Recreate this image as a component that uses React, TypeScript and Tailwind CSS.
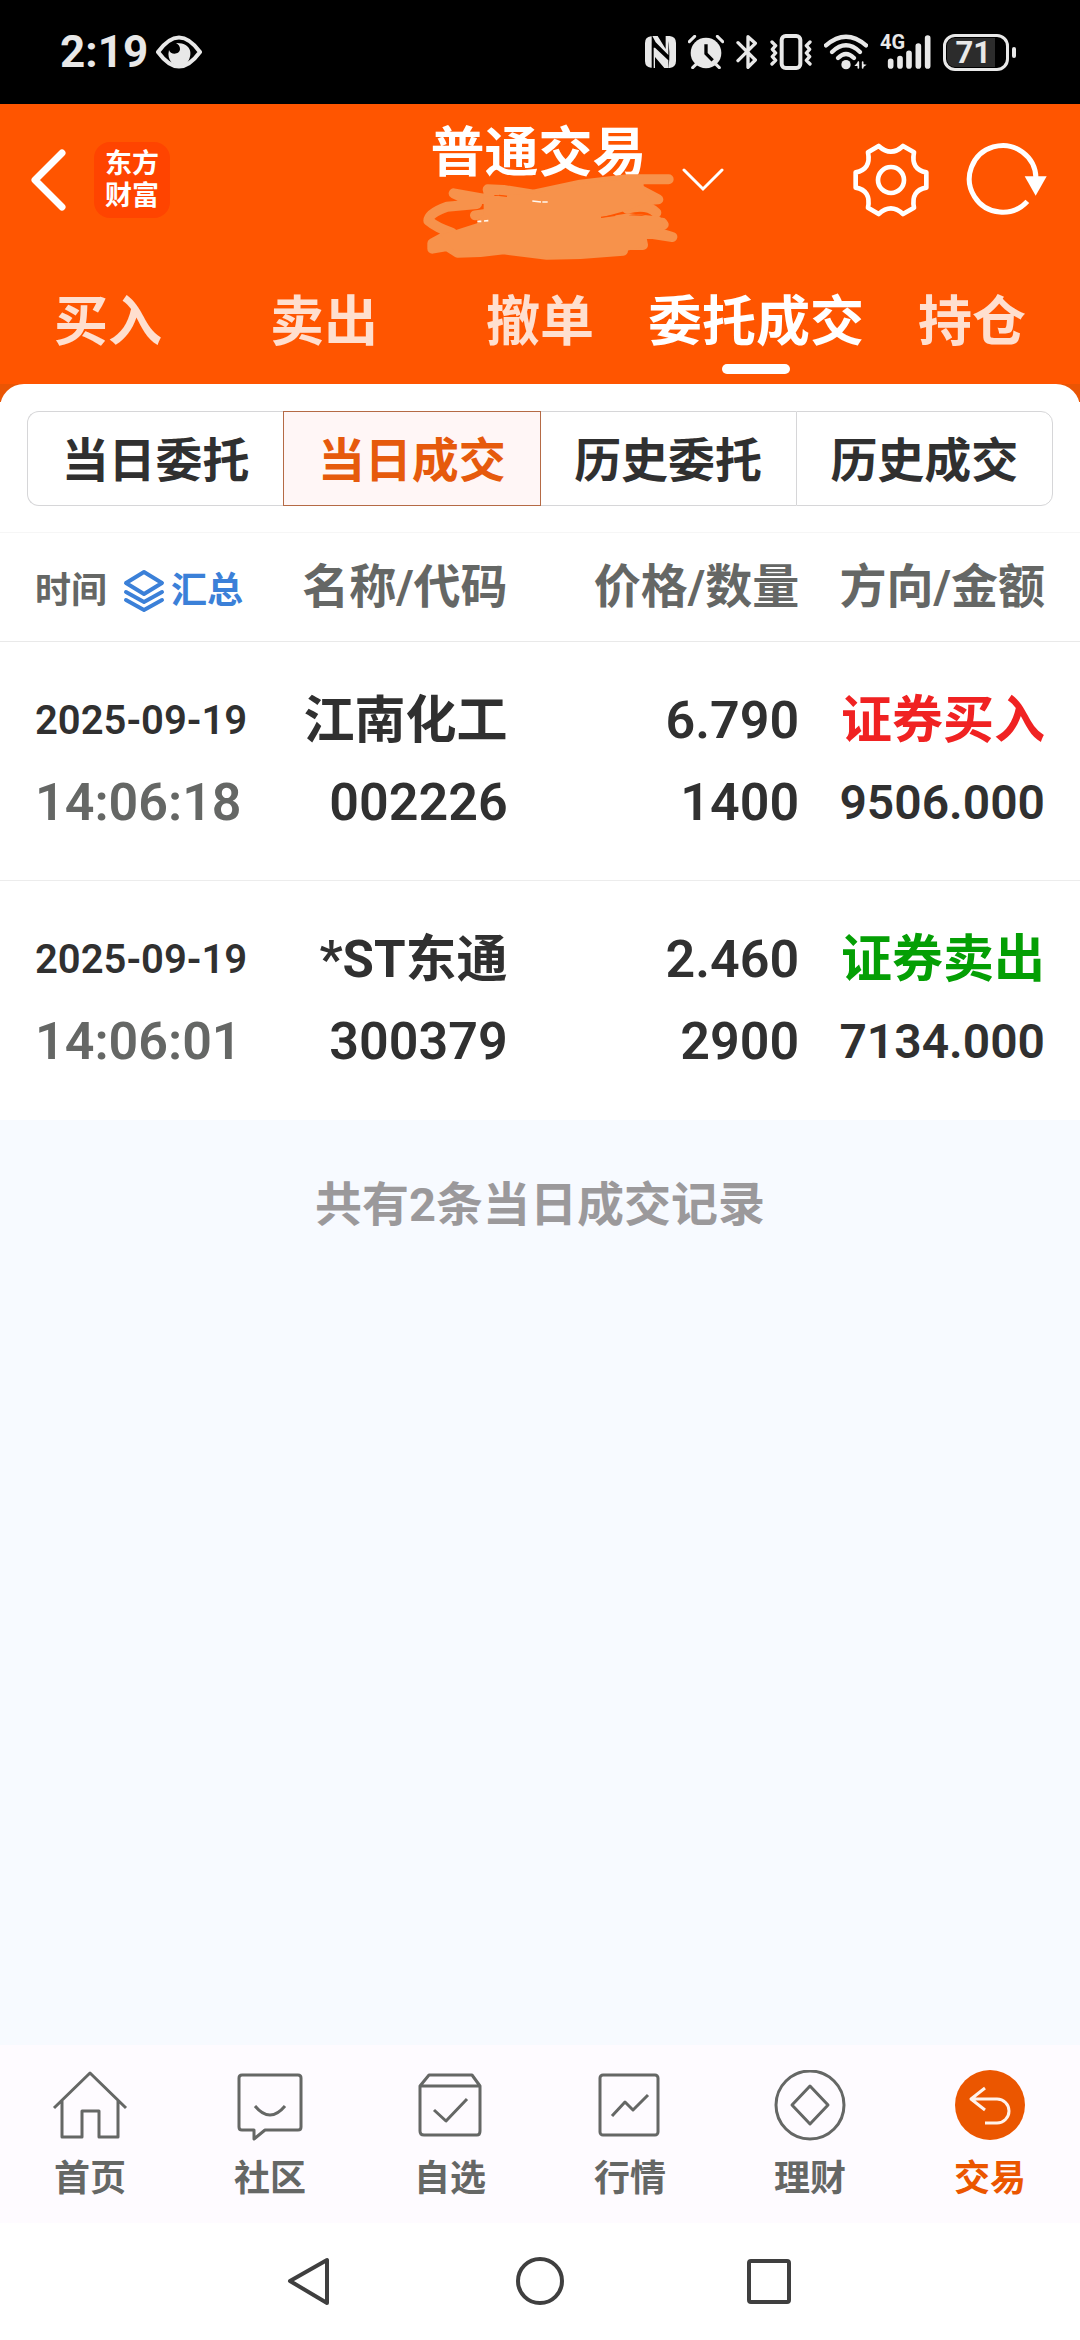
import React from "react";

const SANS = "font-['Roboto','Noto_Sans_CJK_SC',sans-serif]";

function StatusBar() {
  return (
    <div className="flex h-[104px] items-center justify-between bg-black pr-[64px] pl-[60px] text-[#e8e8e8]">
      <div className="flex items-center gap-2">
        <span className="text-[44px] leading-[52px] font-bold">2:19</span>
        <svg width="46" height="34" viewBox="0 0 46 34" fill="none" aria-hidden="true">
          <path d="M2 17 C10 6 16 2.500 23 2.500 C30 2.500 36 6 44 17 C36 28 30 31.500 23 31.500 C16 31.500 10 28 2 17Z" stroke="currentColor" strokeWidth="4" strokeLinejoin="round" />
          <path d="M20 8 C38 8 36 22 31 28 Q23 33 16 28 Q11 23 13 15 C14 20 24 20 24 14 Q24 10 20 8Z" fill="currentColor" />
        </svg>
      </div>
      <div className="flex items-center">
        <svg className="mr-3" width="31" height="34" viewBox="0 0 93 102" aria-hidden="true">
          <path d="M18 4 H20 V98 H18 Q0 96 0 78 V24 Q0 6 18 4Z" fill="currentColor" />
          <path d="M22 3 H38 L62 42 V3 H70 V60 L32 22 Z" fill="currentColor" />
          <path d="M30 38 L70 76 V99 H58 L30 66 V99 H26 V38Z" fill="currentColor" />
          <path d="M66 3 H74 Q93 5 93 24 V78 Q93 96 74 99 H70 Q78 50 66 3Z" fill="currentColor" />
        </svg>
        <svg className="mr-3" width="36" height="34" viewBox="0 0 108 102" fill="none" stroke="currentColor" aria-hidden="true">
          <circle cx="54" cy="54" r="46" fill="currentColor" stroke="none" />
          <path d="M4 20 L20 4 M104 20 L88 4 M24 88 L14 98 M84 88 L94 98" strokeWidth="9" strokeLinecap="round" />
          <path d="M54 28 V56 L74 76" stroke="#000" strokeWidth="10" />
        </svg>
        <svg className="mr-3" width="22" height="36" viewBox="0 0 66 108" fill="none" stroke="currentColor" strokeWidth="10" strokeLinecap="round" strokeLinejoin="round" aria-hidden="true">
          <path d="M6 26 L58 78 L36 100 V8 L58 28 L6 80" />
        </svg>
        <svg className="mr-3" width="42" height="36" viewBox="0 0 126 108" fill="none" stroke="currentColor" strokeLinecap="round" strokeLinejoin="round" aria-hidden="true">
          <rect x="35" y="6" width="56" height="96" rx="12" strokeWidth="12" />
          <path d="M6 24 L17 35 L7 46 L17 57 L7 68 L17 79 L6 90 M120 24 L109 35 L119 46 L109 57 L119 68 L109 79 L120 90" strokeWidth="10" />
        </svg>
        <svg className="mr-3" width="44" height="36" viewBox="0 0 132 108" fill="none" stroke="currentColor" strokeWidth="13" strokeLinecap="round" aria-hidden="true">
          <path d="M6 34 Q66 -18 126 34" />
          <path d="M24 54 Q66 14 108 54" />
          <path d="M42 72 Q66 48 90 72" />
          <circle cx="66" cy="92" r="14" fill="currentColor" stroke="none" />
          <path d="M91 96 L104 82 V104 V96Z M114 82 V104 M114 90 L128 92 L114 102Z" fill="currentColor" stroke="none" />
          <path d="M103 84 V102 M116 84 V102" strokeWidth="5" />
        </svg>
        <div className="relative mr-3 h-[36px] w-[51px]">
          <span className="absolute -top-px left-0 text-[20px] leading-[18px] font-bold">4G</span>
          <svg width="51" height="36" viewBox="0 0 153 108" stroke="currentColor" strokeWidth="17" strokeLinecap="round" aria-hidden="true">
            <path d="M32 82 V96 M60 74 V96 M87 58 V96 M115 36 V96 M143 12 V96" />
          </svg>
        </div>
        <div className="flex h-[37px] w-[66px] items-center rounded-[12px] border-[3px] border-current p-px">
          <div className="flex h-full w-[48px] items-center justify-end rounded-l-[8px] bg-[#2c2c2c] pr-1">
            <span className="text-[31px] leading-[31px] font-bold">71</span>
          </div>
        </div>
        <div className="ml-[3px] h-[11px] w-[4px] rounded-full bg-current" />
      </div>
    </div>
  );
}

function Scribble() {
  return (
    <svg className="-mt-[7px] -mb-1" width="255" height="86" viewBox="128 222 765 258" fill="none" aria-hidden="true">
      <g stroke="#f7924b" strokeWidth="30" strokeLinecap="round" strokeLinejoin="round">
        <path d="M865 238 L740 238 L600 254 L460 284 L370 270 L322 268 L330 300 L220 280 L290 312 L200 320 Q144 340 144 362 Q170 384 215 398 L156 430 L156 446 L200 438 L232 458 L300 456 L370 448 L500 464 L600 462 L728 452 L720 435 L788 435 L780 396 L876 411 L800 388 L850 374 L846 368 L780 366" />
        <path d="M284 346 L400 330 L834 298 L780 270 M828 338 Q800 310 740 326" />
      </g>
      <path fill="#f7924b" d="M310 290 L460 280 L620 250 L790 232 L790 270 L815 300 L745 330 L660 353 L745 340 L840 350 L850 380 L800 410 L790 440 L700 462 L500 474 L370 460 L220 450 L180 405 L290 370 L310 340Z" />
      <path stroke="#ff5500" strokeWidth="4" d="M356 286 L380 289 M662 352 L705 346" />
      <path fill="#ff5500" d="M745 346 Q770 338 796 348Z" />
      <path stroke="#fff8f0" strokeWidth="5" d="M456 303 L482 306 M486 306 H502 M291 364 H303 M311 363 L324 362" />
    </svg>
  );
}

const tabs = ["买入", "卖出", "撤单", "委托成交", "持仓"];

function Header() {
  return (
    <header className="bg-[#ff5500] text-white">
      <div className="grid grid-cols-[1fr_auto_1fr] items-center">
        <div className="flex items-center gap-7 pl-[30px]">
          <button type="button" aria-label="返回">
            <svg width="36" height="62" viewBox="0 0 36 62" fill="none" stroke="currentColor" strokeWidth="7" strokeLinecap="round" strokeLinejoin="round">
              <path d="M32 4 L5 31 L32 58" />
            </svg>
          </button>
          <a href="#home" className="flex size-[76px] flex-col items-center justify-center rounded-[16px] bg-[#ff4400] text-[27px] leading-[32px] font-bold">
            <span>东方</span>
            <span>财富</span>
          </a>
        </div>
        <button type="button" className="flex items-center gap-1 pl-[66px]">
          <span className="flex flex-col items-start pt-[23px]">
            <span className="pl-2 text-[54px] leading-[54px] font-bold">普通交易</span>
            <Scribble />
          </span>
          <svg width="42" height="24" viewBox="0 0 42 24" fill="none" stroke="currentColor" strokeWidth="3" strokeLinecap="round" aria-hidden="true">
            <path d="M2 2 L21 21 L40 2" />
          </svg>
        </button>
        <div className="flex items-center justify-end gap-9 pr-[32px]">
          <button type="button" aria-label="设置">
            <svg width="76" height="76" viewBox="453 125 228 228" fill="none" stroke="currentColor" strokeWidth="14" strokeLinejoin="round">
              <path d="M530 137 Q567 171 603 137 L636 156 Q626 208 673 216 L673 262 Q626 270 636 322 L603 341 Q567 307 530 341 L498 322 Q508 270 461 262 L461 216 Q508 208 498 156 Z" />
              <circle cx="567" cy="239" r="39" />
            </svg>
          </button>
          <button type="button" aria-label="刷新">
            <svg width="83" height="76" viewBox="793 125 249 228" fill="none" stroke="currentColor" strokeWidth="15">
              <path d="M980 303 A100 100 0 1 1 1006 234" />
              <path d="M972 228 H1038 L1005 286Z" fill="currentColor" stroke="none" />
            </svg>
          </button>
        </div>
      </div>
      <nav className="grid grid-cols-5 pt-[38px] pb-[10px]">
        {tabs.map((t) => {
          const active = t === "委托成交";
          return (
            <button key={t} type="button" className="flex flex-col items-center whitespace-nowrap">
              <span className={active ? "text-[54px] leading-[58px] font-bold" : "text-[54px] leading-[58px] font-bold text-[#ffdfcf]"}>{t}</span>
              <span className={active ? "mt-3 h-[10px] w-[68px] rounded-full bg-white" : "mt-3 h-[10px]"} />
            </button>
          );
        })}
      </nav>
    </header>
  );
}

function Segments() {
  const base = "h-full flex-1 whitespace-nowrap pt-1 text-[47px] leading-[47px] font-bold";
  return (
    <div className="border-b border-[#f6f6f6] px-[27px] pt-[27px] pb-[26px]">
      <div className="flex h-[95px] text-[#303030]">
        <button type="button" className={`${base} rounded-l-[12px] border border-r-0 border-[#d6d6d8]`}>当日委托</button>
        <button type="button" className={`${base} border border-[#b56a45] bg-[#fff6f6] text-[#e65a0c]`}>当日成交</button>
        <button type="button" className={`${base} border-y border-[#d6d6d8]`}>历史委托</button>
        <button type="button" className={`${base} rounded-r-[12px] border border-[#d6d6d8]`}>历史成交</button>
      </div>
    </div>
  );
}

const trades = [
  { date: "2025-09-19", time: "14:06:18", name: "江南化工", code: "002226", price: "6.790", qty: "1400", side: "证券买入", buy: true, amount: "9506.000" },
  { date: "2025-09-19", time: "14:06:01", name: "*ST东通", code: "300379", price: "2.460", qty: "2900", side: "证券卖出", buy: false, amount: "7134.000" },
];

function Trades() {
  const cell = "pt-[38px] pb-[36px]";
  const num = "text-[52px] leading-[82px]";
  const head = "p-0 text-right text-[47px] leading-[108px] font-bold";
  return (
    <table className="w-full table-fixed whitespace-nowrap text-[#303030]">
      <thead>
        <tr className="border-b border-[#e9e9e9] text-[#656765]">
          <th scope="col" className="w-[26%] p-0 pl-[35px] text-[36px] leading-[44px] font-bold">
            <div className="flex items-center gap-4 pt-2">
              <span>时间</span>
              <button type="button" className="flex items-center gap-1.5 text-[#3b80d8]">
                <svg width="42" height="44" viewBox="0 0 42 44" fill="none" stroke="currentColor" strokeWidth="4" strokeLinejoin="round" strokeLinecap="round" aria-hidden="true">
                  <path d="M21 3 L39 14 L21 25 L3 14 Z M3 23 L21 33 L39 23 M3 31 L21 41 L39 31" />
                </svg>
                汇总
              </button>
            </div>
          </th>
          <th scope="col" className={`${head} w-[21%]`}>名称/代码</th>
          <th scope="col" className={`${head} w-[27%]`}>价格/数量</th>
          <th scope="col" className={`${head} w-[26%] pr-[35px]`}>方向/金额</th>
        </tr>
      </thead>
      <tbody>
        {trades.map((t) => (
          <tr key={t.time} className="border-b border-[#ececec] font-semibold last:border-transparent">
            <td className={`${cell} pl-[35px]`}>
              <div className="text-[40px] leading-[82px]">{t.date}</div>
              <div className={`${num} text-[#656765]`}>{t.time}</div>
            </td>
            <td className={`${cell} text-right`}>
              <div className="text-[51px] leading-[82px] font-bold">{t.name}</div>
              <div className={num}>{t.code}</div>
            </td>
            <td className={`${cell} text-right`}>
              <div className={num}>{t.price}</div>
              <div className={num}>{t.qty}</div>
            </td>
            <td className={`${cell} pr-[35px] text-right`}>
              <div className={t.buy ? "text-[51px] leading-[82px] font-bold text-[#f02222]" : "text-[51px] leading-[82px] font-bold text-[#049f04]"}>{t.side}</div>
              <div className="text-[48px] leading-[82px]">{t.amount}</div>
            </td>
          </tr>
        ))}
      </tbody>
    </table>
  );
}

const navItems: { label: string; icon: React.ReactNode }[] = [
  { label: "首页", icon: <path d="M2 38 L38 3 L74 38 M10 31 V67 H30 V41 H47 V67 H66 V31" /> },
  {
    label: "社区",
    icon: <path d="M10 5 H66 Q69 5 69 8 V57 Q69 60 66 60 H33 L22 69 V60 H10 Q7 60 7 57 V8 Q7 5 10 5Z M23 36 Q38 54 53 36" />,
  },
  {
    label: "自选",
    icon: <path d="M17 5 H60 L68 16 V61 Q68 65 65 65 H12 Q8 65 8 61 V16 Z M8 16 H68 M22 40 L34 51 L55 29" />,
  },
  {
    label: "行情",
    icon: (
      <>
        <rect x="8" y="5" width="58" height="60" rx="3" />
        <path d="M20 46 L33 32 L41 40 L56 25" />
      </>
    ),
  },
  {
    label: "理财",
    icon: (
      <>
        <circle cx="38" cy="35" r="34" />
        <path d="M38 16 L56 35 L38 54 L20 35Z" />
      </>
    ),
  },
  {
    label: "交易",
    icon: (
      <>
        <circle cx="38" cy="35" r="35" fill="currentColor" stroke="none" />
        <path d="M33 18 L19 29 L33 40 M20 29 H45 A12 12 0 0 1 45 53 H33" stroke="#fff3ec" />
      </>
    ),
  },
];

function BottomNav() {
  return (
    <nav className="grid h-[178px] grid-cols-6 bg-[#fefbff]">
      {navItems.map((n) => (
        <a key={n.label} href="#nav" className={n.label === "交易" ? "flex flex-col items-center pt-[25px] text-[#eb5600]" : "flex flex-col items-center pt-[25px] text-[#656765]"}>
          <svg width="76" height="72" viewBox="0 0 76 72" fill="none" stroke="currentColor" strokeWidth="3" strokeLinejoin="round" aria-hidden="true">
            {n.icon}
          </svg>
          <span className="mt-[15px] text-[36px] leading-[44px] font-bold">{n.label}</span>
        </a>
      ))}
    </nav>
  );
}

function SystemNav() {
  return (
    <div className="flex h-[117px] items-center justify-center gap-[182px] bg-white text-[#3f3f3f]">
      <button type="button" aria-label="后退">
        <svg width="48" height="50" viewBox="0 0 48 50" fill="none" stroke="currentColor" strokeWidth="4" strokeLinejoin="round">
          <path d="M4 24 L41 3 V46Z" />
        </svg>
      </button>
      <button type="button" aria-label="主屏幕">
        <svg width="48" height="50" viewBox="0 0 48 50" fill="none" stroke="currentColor" strokeWidth="4">
          <circle cx="24" cy="24" r="22" />
        </svg>
      </button>
      <button type="button" aria-label="最近任务">
        <svg width="48" height="50" viewBox="0 0 48 50" fill="none" stroke="currentColor" strokeWidth="4">
          <rect x="3" y="4" width="40" height="41" rx="2" />
        </svg>
      </button>
    </div>
  );
}

export default function App() {
  return (
    <div className={`flex min-h-screen flex-col bg-[#f7faff] ${SANS}`}>
      <StatusBar />
      <Header />
      <main className="flex-1">
        <div className="bg-linear-to-b from-[#ea5504] from-[18px] to-white to-[18px]">
          <div className="rounded-t-[24px] bg-white">
            <Segments />
            <Trades />
          </div>
        </div>
        <p className="pt-[57px] text-center text-[47px] leading-[56px] font-bold text-[#9b999b]">共有2条当日成交记录</p>
      </main>
      <BottomNav />
      <SystemNav />
    </div>
  );
}
